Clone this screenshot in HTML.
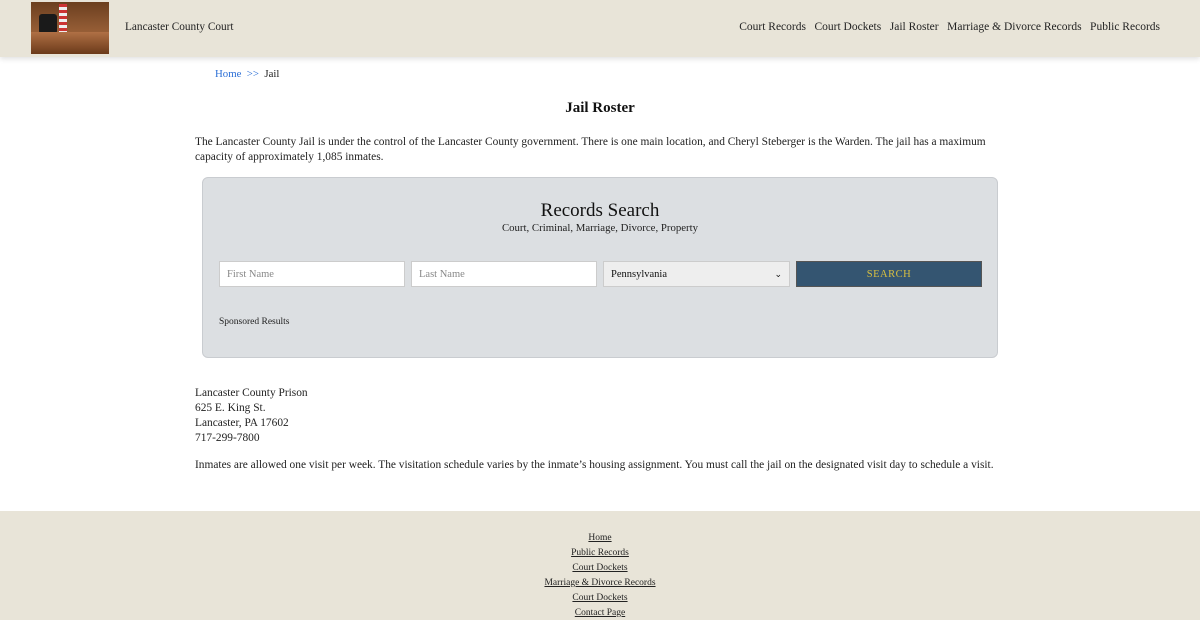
<!DOCTYPE html>
<html><head><meta charset="utf-8"><style>
*{margin:0;padding:0;box-sizing:border-box}
body{width:1200px;height:620px;overflow:hidden;background:#fff;font-family:"Liberation Serif",serif;color:#222;font-size:12px}
.hdr{height:57px;background:#e8e4d8;position:relative;box-shadow:0 2px 5px rgba(0,0,0,.12)}
.logo{position:absolute;left:31px;top:2px;width:78px;height:52px;background:linear-gradient(180deg,#6b3f1f 0%,#8a5530 40%,#a0643a 70%,#5a3218 100%)}
.logo .flag{position:absolute;left:28px;top:2px;width:8px;height:30px;background:repeating-linear-gradient(180deg,#c33 0 3px,#eee 3px 6px)}
.logo .chair{position:absolute;left:8px;top:12px;width:18px;height:20px;background:#1a1a1a;border-radius:3px}
.logo .desk{position:absolute;left:0;top:30px;width:78px;height:22px;background:linear-gradient(180deg,#b07045,#6b3a1a)}
.site{position:absolute;left:125px;top:21px;font-size:11.3px;color:#222}
.nav{position:absolute;right:40px;top:21px;font-size:11.5px}
.nav a{color:#222;text-decoration:none;margin-left:8.5px}
.bc{position:absolute;left:215px;top:68px;font-size:10.8px}
.bc a{color:#2a6ed6;text-decoration:none}
h1{position:absolute;top:100px;width:1200px;text-align:center;font-size:15px;font-weight:bold;color:#111}
.p1{position:absolute;left:195px;top:135px;width:805px;line-height:15px;font-size:11.4px}
.box{position:absolute;left:202px;top:177px;width:796px;height:181px;background:#dcdfe2;border:1px solid #c9ccd0;border-radius:6px}
.box .t{position:absolute;top:22px;width:100%;text-align:center;font-size:19px;color:#111}
.box .s{position:absolute;top:44px;width:100%;text-align:center;font-size:10.8px}
.in{position:absolute;top:83px;height:26px;background:#fff;border:1px solid #ccc;font-size:10.5px;color:#888;padding:7px 7px}
.sel{background:#eee;color:#111}
.btn{position:absolute;left:593px;top:83px;width:186px;height:26px;background:#345571;border:1px solid #555;color:#d8c040;text-align:center;font-size:10.5px;letter-spacing:.5px;padding-top:7px}
.sp{position:absolute;left:16px;top:139px;font-size:9.5px}
.addr{position:absolute;left:195px;top:386px;line-height:15px;font-size:11.4px}
.p2{position:absolute;left:195px;top:459px;font-size:11.4px}
.ftr{position:absolute;top:511px;left:0;width:1200px;height:109px;background:#e8e4d8;text-align:center;padding-top:20px;font-size:9.5px;line-height:15px}
.ftr a{color:#222;display:block;text-decoration:underline}
</style></head><body>
<div class="hdr">
<div class="logo"><div class="chair"></div><div class="flag"></div><div class="desk"></div></div>
<div class="site">Lancaster County Court</div>
<div class="nav"><a>Court Records</a><a>Court Dockets</a><a>Jail Roster</a><a>Marriage &amp; Divorce Records</a><a>Public Records</a></div>
</div>
<div class="bc"><a>Home</a> &nbsp;<a>&gt;&gt;</a>&nbsp; Jail</div>
<h1>Jail Roster</h1>
<div class="p1">The Lancaster County Jail is under the control of the Lancaster County government. There is one main location, and Cheryl Steberger is the Warden. The jail has a maximum capacity of approximately 1,085 inmates.</div>
<div class="box">
<div class="t">Records Search</div>
<div class="s">Court, Criminal, Marriage, Divorce, Property</div>
<div class="in" style="left:16px;width:186px">First Name</div>
<div class="in" style="left:208px;width:186px">Last Name</div>
<div class="in sel" style="left:400px;width:187px">Pennsylvania<span style="float:right;font-size:9px">&#8964;</span></div>
<div class="btn">SEARCH</div>
<div class="sp">Sponsored Results</div>
</div>
<div class="addr">Lancaster County Prison<br>625 E. King St.<br>Lancaster, PA 17602<br>717-299-7800</div>
<div class="p2">Inmates are allowed one visit per week. The visitation schedule varies by the inmate’s housing assignment. You must call the jail on the designated visit day to schedule a visit.</div>
<div class="ftr"><a>Home</a><a>Public Records</a><a>Court Dockets</a><a>Marriage &amp; Divorce Records</a><a>Court Dockets</a><a>Contact Page</a></div>
</body></html>
